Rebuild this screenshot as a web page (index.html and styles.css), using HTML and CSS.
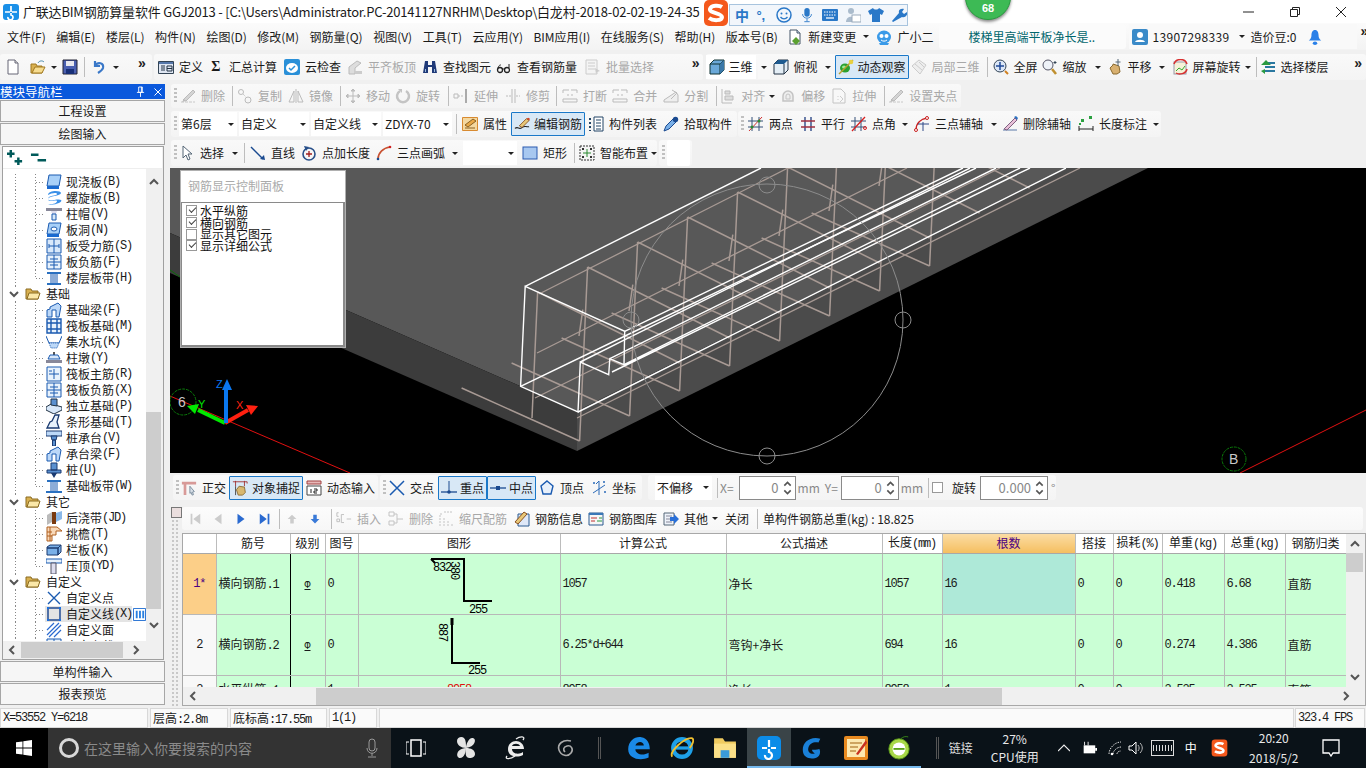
FILE: index.html
```html
<!DOCTYPE html>
<html lang="zh-CN">
<head>
<meta charset="utf-8">
<title>广联达BIM钢筋算量软件 GGJ2013</title>
<link rel="stylesheet" href="styles.css">
</head>
<body>
<svg class="sprite" xmlns="http://www.w3.org/2000/svg">
<symbol id="new" viewBox="0 0 16 16"><path d="M3 1h7l3 3v11H3z" fill="#fff" stroke="#667"/><path d="M10 1v3h3" fill="#ddd" stroke="#667"/></symbol>
<symbol id="open" viewBox="0 0 16 16"><path d="M1 5h5l1 2h5v7H1z" fill="#d8b050" stroke="#a07820"/><path d="M2 14l3-6h10l-3 6z" fill="#f6dc90" stroke="#a07820"/><path d="M8 4c1-2 4-3 6-1" stroke="#48a" fill="none"/></symbol>
<symbol id="save" viewBox="0 0 16 16"><path d="M1 1h14v14H1z" fill="#4a5fb0" stroke="#223"/><path d="M4 2h8v5H4z" fill="#e8e8ee"/><path d="M4 10h8v5H4z" fill="#182f78"/></symbol>
<symbol id="undo" viewBox="0 0 16 16"><path d="M4 2v5h5M4 7c3-5 9-3 8 2-.5 2-2 3-5 5" fill="none" stroke="#3a78c8" stroke-width="2.2"/></symbol>
<symbol id="def" viewBox="0 0 16 16"><path d="M.5 2.500h15v12H.5z" fill="#dfe6f2" stroke="#345"/><path d="M1 3h14v2H1z" fill="#5577aa"/><path d="M3 7h4M3 9h4M3 11h4M9 7h5v5H9zM9 9.500h5" stroke="#234" fill="none"/></symbol>
<symbol id="cloud" viewBox="0 0 16 16"><rect width="16" height="16" rx="2" fill="#2a90d8"/><ellipse cx="8" cy="9" rx="6" ry="5" fill="#fff"/><path d="M5 9l2 2 4-4" stroke="#2a90d8" stroke-width="1.500" fill="none"/></symbol>
<symbol id="flush" viewBox="0 0 16 16"><path d="M2 15V8l8-6 4 2-6 5v6z" fill="#ddd" stroke="#bbb"/><path d="M8 12h7v3H8z" fill="#ccc"/></symbol>
<symbol id="binoc" viewBox="0 0 16 16"><path d="M3 2h3v4h4V2h3l2 12h-5V8H6v6H1z" fill="#203a78"/><path d="M3 10h1v3H3zM12 10h1v3h-1z" fill="#9bd"/></symbol>
<symbol id="glass" viewBox="0 0 16 16"><circle cx="4" cy="11" r="2.500" fill="none" stroke="#222" stroke-width="1.300"/><circle cx="11" cy="11" r="2.500" fill="none" stroke="#222" stroke-width="1.300"/><path d="M6 10h3M2 9c1-3 2-3 3-3M13 9V5" stroke="#222" fill="none"/></symbol>
<symbol id="batch" viewBox="0 0 16 16"><path d="M1 1h11v14H1z" fill="#f4f4f4" stroke="#ccc"/><path d="M3 4h7M3 7h7M3 10h7" stroke="#ccc"/><path d="M10 9l5 3-3 1-1 2z" fill="#ccc"/></symbol>
<symbol id="cube" viewBox="0 0 16 16"><path d="M1 5l4-4h10v10l-4 4H1z" fill="#6aa8d8" stroke="#133"/><path d="M1 5h10v10M11 5l4-4" fill="none" stroke="#133"/><path d="M11 5l4-4v10l-4 4z" fill="#3a78a8"/></symbol>
<symbol id="cubetop" viewBox="0 0 16 16"><path d="M1 5l4-4h10v10l-4 4H1z" fill="#e4eef6" stroke="#234"/><path d="M1 5l4-4h10l-4 4z" fill="#1d5a90"/><path d="M11 5v10" stroke="#234"/></symbol>
<symbol id="orbit" viewBox="0 0 16 16"><ellipse cx="7" cy="9" rx="5" ry="4.500" fill="#2aa030"/><ellipse cx="6" cy="8" rx="2" ry="1.500" fill="#9e9"/><path d="M1 15L15 1" stroke="#b8a030" stroke-width="1.500"/><circle cx="13" cy="3" r="2.300" fill="#e8d040"/></symbol>
<symbol id="local" viewBox="0 0 16 16"><path d="M1 7l7-6 7 5-6 9z" fill="#eee" stroke="#ccc"/><path d="M4 5l7 6M8 3l5 5M1 7l8 8" stroke="#ccc" fill="none"/></symbol>
<symbol id="fit" viewBox="0 0 16 16"><circle cx="7" cy="7" r="6" fill="#dbe6f6" stroke="#345"/><path d="M7 3v8M3 7h8" stroke="#204a98" stroke-width="1.500"/><path d="M12 12l3 3" stroke="#d08020" stroke-width="2"/></symbol>
<symbol id="zoom" viewBox="0 0 16 16"><circle cx="6" cy="6" r="5" fill="#eef2f8" stroke="#556"/><path d="M10 10l4 5" stroke="#c09030" stroke-width="2.500"/><path d="M13 2v3M11.500 3.500h3" stroke="#345"/></symbol>
<symbol id="hand" viewBox="0 0 16 16"><path d="M3 9l3-3v-1l6 2 1 6-3 2H6z" fill="#d8b070" stroke="#8a6a30"/><path d="M11 0v7M8.500 3h5" stroke="#567"/></symbol>
<symbol id="srot" viewBox="0 0 16 16"><rect x="2" y="3" width="12" height="12" fill="#f6f2d8" stroke="#99a"/><path d="M4 12l3-3 3 2 3-4" stroke="#3a3" fill="none"/><path d="M2 5c2-6 11-6 13 0M15 10c-1 5-8 6-11 4" stroke="#d83030" stroke-width="1.500" fill="none"/></symbol>
<symbol id="floors" viewBox="0 0 16 16"><path d="M5 3h10v2H5zM5 7h10v2H5zM5 11h10v2H5z" fill="#2a78a0"/><path d="M6 1L1 6h10M1 12l4-2v5z" fill="#2a9a40"/></symbol>
<symbol id="erase" viewBox="0 0 16 16"><path d="M1 14h14" stroke="#c8c8c8" stroke-dasharray="3 1"/><path d="M3 12L13 2l2 2-9 9z" fill="#d4d4d4" stroke="#bbb"/><path d="M2 14l2-3 2 2z" fill="#bbb"/></symbol>
<symbol id="copy" viewBox="0 0 16 16"><circle cx="4" cy="4" r="2.500" fill="none" stroke="#bbb"/><circle cx="11" cy="12" r="3" fill="none" stroke="#bbb"/><path d="M6 6l3 3" stroke="#bbb" stroke-dasharray="1 1"/></symbol>
<symbol id="mirror" viewBox="0 0 16 16"><path d="M8 1v14M1 14L6 3v11zM15 14L10 3v11z" fill="none" stroke="#bbb"/></symbol>
<symbol id="move" viewBox="0 0 16 16"><path d="M8 1v14M1 8h14M8 1L6 3h4zM8 15l-2-2h4zM1 8l2-2v4zM15 8l-2-2v4z" fill="#ccc" stroke="#bbb"/></symbol>
<symbol id="rot" viewBox="0 0 16 16"><path d="M5 3a6 6 0 1 0 6 0" fill="none" stroke="#c4c4c4" stroke-width="2.500"/><path d="M3 1h4v4" fill="#c4c4c4"/></symbol>
<symbol id="ext" viewBox="0 0 16 16"><path d="M5 8h5" fill="none" stroke="#bbb" stroke-dasharray="2 1"/><path d="M13 1v14" stroke="#aaa" stroke-width="2"/><path d="M1 6h4v4H1z" fill="none" stroke="#bbb"/></symbol>
<symbol id="trim" viewBox="0 0 16 16"><path d="M7 1v14M10 1v14" stroke="#bbb"/><path d="M1 8h6M11 8h4" stroke="#bbb" stroke-dasharray="2 1"/></symbol>
<symbol id="brk" viewBox="0 0 16 16"><path d="M1 5V2h6M15 5V2H9M1 11h14v3H1z" fill="none" stroke="#bbb"/><path d="M5 7h2M9 7h2" stroke="#bbb"/></symbol>
<symbol id="seg" viewBox="0 0 16 16"><path d="M1 12l12-8 2 3v7H1z" fill="#eee" stroke="#bbb"/><path d="M9 2l5 3-6 6" stroke="#bbb" fill="none"/></symbol>
<symbol id="algn" viewBox="0 0 16 16"><path d="M2 1v14h10" stroke="#bbb" fill="none"/><path d="M5 3h5v3H5zM5 8h8v4H5z" fill="#ddd" stroke="#bbb"/></symbol>
<symbol id="offs" viewBox="0 0 16 16"><path d="M3 13V8a5 5 0 0 1 10 0v5z" fill="#eee" stroke="#c4c4c4" stroke-width="1.500"/><path d="M6 11V8a2 2 0 0 1 4 0v3z" fill="none" stroke="#c4c4c4"/></symbol>
<symbol id="strt" viewBox="0 0 16 16"><path d="M2 1h8l4 4v10H2z" fill="#f8f8f8" stroke="#c4c4c4"/><path d="M9 8l3 3-3 3M7 8v1M7 11v1" stroke="#ccc" fill="none"/></symbol>
<symbol id="prop" viewBox="0 0 16 16"><path d="M.5 1.500h15v13H.5z" fill="#f4d8a0" stroke="#d88a30"/><path d="M3 9l8-6 3 2-8 6z" fill="#e8a848" stroke="#8a6020"/><path d="M3 12h10" stroke="#8a6020"/></symbol>
<symbol id="edit" viewBox="0 0 18 16"><path d="M1 13c4-3 4 2 8-1s4 0 8-1" stroke="#222" fill="none" stroke-width="1.200"/><path d="M6 10L14 2l3 2-8 8z" fill="#e8c878" stroke="#8a5020"/><path d="M14 2l3 2 1-2-2-1z" fill="#d04020"/></symbol>
<symbol id="list" viewBox="0 0 16 16"><path d="M6 1h9v14H6z" fill="#fff" stroke="#246"/><path d="M8 4h5M8 7h5M8 10h5M8 13h5" stroke="#246"/><path d="M1 2h2v2H1zM1 6h2v2H1zM1 10h2v2H1zM1 14h2v1H1z" fill="#246"/></symbol>
<symbol id="pick" viewBox="0 0 16 16"><path d="M1 15l2-5 7-7 3 3-7 7z" fill="#7ab0e8" stroke="#1a4a90"/><circle cx="12.500" cy="3.500" r="2.700" fill="#1a4a90"/></symbol>
<symbol id="two" viewBox="0 0 16 16"><path d="M4 1v14M11 1v14M0 5h15M0 11h15" stroke="#345078"/><path d="M1 15L14 1" stroke="#d03030"/><circle cx="4" cy="11" r="1.500" fill="#2a8a30"/><circle cx="11" cy="5" r="1.500" fill="#2a8a30"/></symbol>
<symbol id="para" viewBox="0 0 16 16"><path d="M5 1v14M11 1v14" stroke="#304a88" stroke-width="1.400"/><path d="M1 5h14M1 11h14" stroke="#a03040" stroke-width="1.400"/></symbol>
<symbol id="angl" viewBox="0 0 16 16"><path d="M4 1v14M10 1v14M0 5h15M0 11h15" stroke="#345078"/><path d="M1 15L14 1" stroke="#d82020" stroke-width="1.300"/><circle cx="14" cy="12" r="1.500" fill="none" stroke="#d82020"/></symbol>
<symbol id="arc3" viewBox="0 0 16 16"><path d="M2 14C2 7 7 3 13 2" fill="none" stroke="#c82020" stroke-width="1.400"/><circle cx="2" cy="14" r="1.500" fill="#fff" stroke="#c82020"/><circle cx="13" cy="2" r="1.500" fill="#fff" stroke="#c82020"/><path d="M9 6v9M4 8h11" stroke="#304a88"/></symbol>
<symbol id="dela" viewBox="0 0 16 16"><path d="M1 14h14" stroke="#5a78a8"/><path d="M2 13L13 2l2 2-10 10z" fill="#e8c0d8" stroke="#806080"/><path d="M12 1l3 3 1-2-2-2z" fill="#2a70c0"/></symbol>
<symbol id="dim" viewBox="0 0 16 16"><path d="M1 10v5M15 10v5M1 13h14" stroke="#222"/><path d="M3 3h3v3H3zM11 0h3v3h-3z" fill="#2aa040"/><path d="M1 8h2" stroke="#2aa040" stroke-width="2"/></symbol>
<symbol id="ptr" viewBox="0 0 16 16"><path d="M4 1v12l3-3 2 5 2-1-2-5h4z" fill="#fff" stroke="#567"/></symbol>
<symbol id="line" viewBox="0 0 16 16"><path d="M1 2l12 12" stroke="#1a4a90" stroke-width="1.500"/><path d="M15 15l-1-5-4 4z" fill="#1a4a90"/></symbol>
<symbol id="addl" viewBox="0 0 16 16"><circle cx="8" cy="9" r="6" fill="none" stroke="#28508a" stroke-width="1.600"/><path d="M8 6v6M5 9h6" stroke="#a02020" stroke-width="1.300"/><path d="M3 1l5 1-3 4z" fill="#28508a"/></symbol>
<symbol id="arc" viewBox="0 0 16 16"><path d="M2 14C2 8 7 3 14 2" fill="none" stroke="#c85030" stroke-width="1.600"/><circle cx="2" cy="14" r="1.300" fill="#1a4a90"/><circle cx="14" cy="2" r="1.300" fill="#d02020"/></symbol>
<symbol id="rect" viewBox="0 0 16 16"><rect x="1" y="2" width="14" height="12" fill="#a8c8f0" stroke="#2a5ab0"/></symbol>
<symbol id="smrt" viewBox="0 0 16 16"><rect x="1" y="1" width="14" height="14" fill="#f4f4f4" stroke="#333" stroke-dasharray="2 1"/><path d="M8 4v8M4 8h8" stroke="#2a8a30"/><path d="M3 3h2v2H3zM11 3h2v2h-2zM3 11h2v2H3zM11 11h2v2h-2z" fill="#333"/></symbol>
<symbol id="orth" viewBox="0 0 18 16"><path d="M1 1h16v3H1zM3 4h3v12H3z" fill="#d89a98"/><path d="M10 6l5 6-2 .500 1 3-1.500.500-1-3L10 14z" fill="#d8e0e8" stroke="#789"/></symbol>
<symbol id="snap" viewBox="0 0 18 16"><path d="M1 1h16v2M4 0v6M14 0v6" fill="none" stroke="#a03030"/><path d="M5 10l3-4 6 1 1 6-3 3H7z" fill="#d8b870" stroke="#8a6a30"/><path d="M4 6v10" stroke="#444"/></symbol>
<symbol id="dyn" viewBox="0 0 16 16"><path d="M1 1h14v3H1z" fill="#e8b8b8" stroke="#a04040"/><path d="M1 6h14v9H1z" fill="#fff" stroke="#444"/><path d="M5 9v4M8 9h3v2H8v2h3" stroke="#222" fill="none"/></symbol>
<symbol id="xpt" viewBox="0 0 16 16"><path d="M1 1l14 14M15 1L1 15" stroke="#1a5ab0" stroke-width="1.500"/></symbol>
<symbol id="perp" viewBox="0 0 16 16"><path d="M0 12h16" stroke="#1a4a90" stroke-width="1.300"/><path d="M8 1v11" stroke="#1a4a90"/><circle cx="8" cy="12" r="1.800" fill="#1a4a90"/></symbol>
<symbol id="midp" viewBox="0 0 16 16"><path d="M0 8h16" stroke="#1a4a90" stroke-width="1.300"/><rect x="6" y="6" width="4" height="4" fill="#1a4a90"/></symbol>
<symbol id="vert" viewBox="0 0 16 16"><path d="M8 1l6 5-2 8H4L2 6z" fill="#e8f0fa" stroke="#1a5ab0" stroke-width="1.400"/></symbol>
<symbol id="coor" viewBox="0 0 16 16"><path d="M8 1v14M8 9l6-4M8 9l-6 4M8 1L5 4" fill="none" stroke="#2a6ab8"/><circle cx="3" cy="3" r="1" fill="#2a6ab8"/><circle cx="13" cy="2" r="1" fill="#2a6ab8"/><circle cx="14" cy="12" r="1" fill="#2a6ab8"/></symbol>
<symbol id="first" viewBox="0 0 16 16"><path d="M3 2h2v12H3zM14 2v12L6 8z" fill="#ccc"/></symbol>
<symbol id="prev" viewBox="0 0 16 16"><path d="M12 2v12L4 8z" fill="#ccc"/></symbol>
<symbol id="next" viewBox="0 0 16 16"><path d="M4 2v12l8-6z" fill="#2a6ad0"/></symbol>
<symbol id="last" viewBox="0 0 16 16"><path d="M2 2v12l8-6zM11 2h2v12h-2z" fill="#2a6ad0"/></symbol>
<symbol id="up" viewBox="0 0 16 16"><path d="M8 3l5 5h-3v5H6V8H3z" fill="#ccc"/></symbol>
<symbol id="down" viewBox="0 0 16 16"><path d="M6 3h4v5h3l-5 5-5-5h3z" fill="#3a7ad8"/></symbol>
<symbol id="ins" viewBox="0 0 18 16"><path d="M3 1H1v4h2M1 8h3v3H1zM6 3h3M6 12h3M6 3v9M12 8h5" stroke="#bbb" fill="none"/></symbol>
<symbol id="dele" viewBox="0 0 16 16"><path d="M1 1h5v4H1zM1 10h5v4H1zM6 3h3M6 12h3M9 3v9M9 8h6" stroke="#c4c4c4" fill="none"/></symbol>
<symbol id="scal" viewBox="0 0 16 16"><path d="M2 15V3h2M6 15V6M10 15V9M14 15v-3M6 1h8" stroke="#c4c4c4" stroke-dasharray="2 1" fill="none"/></symbol>
<symbol id="info" viewBox="0 0 16 16"><path d="M4 3h11v12H4z" fill="#dfe8f8" stroke="#2a5a90"/><path d="M1 11L10 1l3 2-9 10z" fill="#e8c878" stroke="#8a5020"/></symbol>
<symbol id="libr" viewBox="0 0 16 16"><path d="M1 2h14v12H1z" fill="#f6f6f6" stroke="#2a5a90"/><path d="M1 2h14v2H1z" fill="#3a78b8"/><path d="M3 7h6M3 10h4" stroke="#c03030"/><path d="M11 7h3M9 10h5" stroke="#2a9a40"/></symbol>
<symbol id="othr" viewBox="0 0 16 16"><path d="M1 2h10v12H1z" fill="#eef3fa" stroke="#567"/><path d="M3 5h6M3 8h6M3 11h6" stroke="#889"/><path d="M7 6h4V3l5 5-5 5v-3H7z" fill="#2a70d8"/></symbol>
<symbol id="folder" viewBox="0 0 16 16"><path d="M1 3h5l1 2h6v8H1z" fill="#d8b050" stroke="#8a6a20"/><path d="M2 13l2-6h11l-2 6z" fill="#fbe8a8" stroke="#8a6a20"/></symbol>
<symbol id="slab" viewBox="0 0 16 16"><path d="M3 1h12l-2 11H1z" fill="#a8d0f8" stroke="#1a5ab0"/><path d="M1 12h12v3H1z" fill="#1a6ad0"/></symbol>
<symbol id="spir" viewBox="0 0 16 16"><path d="M2 5c0-5 13-5 13-2S2 6 2 9s11-1 13 1-5 5-13 5c6-1 9-2 9-4s-9 2-9-2S11 6 11 4 5 3 2 5z" fill="#3a90e8"/></symbol>
<symbol id="capi" viewBox="0 0 16 16"><path d="M0 2h16v3H0z" fill="#889"/><path d="M5 5h6l-1 3H6z" fill="#dde"/><path d="M6 8h4v6H6z" fill="#d8e8f8" stroke="#1a5ab0"/></symbol>
<symbol id="hole" viewBox="0 0 16 16"><path d="M3 1h12l-2 11H1z" fill="#a8d0f8" stroke="#1a5ab0"/><ellipse cx="8" cy="7" rx="3" ry="2" fill="#fff" stroke="#1a5ab0"/><path d="M1 12h12v3H1z" fill="#1a6ad0"/></symbol>
<symbol id="sbar" viewBox="0 0 16 16"><path d="M1 1h14v14H1z" fill="#d8e8fa" stroke="#1a5ab0"/><path d="M8 1v14M3 8h10M3 6v4M13 6v4" stroke="#1a5ab0"/></symbol>
<symbol id="nbar" viewBox="0 0 16 16"><path d="M1 1h14v14H1z" fill="#e8f2fc" stroke="#1a5ab0"/><path d="M8 1v14M1 8h14M4 5h8M4 11h8" stroke="#1a5ab0"/></symbol>
<symbol id="band" viewBox="0 0 16 16"><path d="M1 2h14v2H1zM1 13h14v2H1z" fill="#2a70c0"/><path d="M5 4v9M11 4v9M7 4v9M9 4v9" stroke="#1a5ab0"/></symbol>
<symbol id="fbm" viewBox="0 0 16 16"><path d="M1 15V8l3-1V5l8-4 3 3-2 11h-3V8H6v7z" fill="#bcd8f8" stroke="#1a5ab0"/></symbol>
<symbol id="raft" viewBox="0 0 16 16"><path d="M1 1h14v14H1zM1 5h14M1 11h14M5 1v14M11 1v14" fill="#e8f2fc" stroke="#1a5ab0" stroke-width="1.400"/></symbol>
<symbol id="pit" viewBox="0 0 16 16"><path d="M0 2l3 7h10l3-7" fill="none" stroke="#1a5ab0"/><path d="M3 9l2 5h6l2-5z" fill="#bcd8f8" stroke="#1a5ab0" stroke-dasharray="1 1"/></symbol>
<symbol id="pier" viewBox="0 0 16 16"><path d="M7 2h2v3H7z" fill="#555"/><path d="M4 5h8l2 4H2z" fill="#d8e8fa" stroke="#1a5ab0"/><path d="M0 10h16v3H0z" fill="#889"/></symbol>
<symbol id="rmain" viewBox="0 0 16 16"><path d="M1 1h14v14H1z" fill="#e8f2fc" stroke="#1a5ab0"/><path d="M8 3v10M3 8h10M3 5h3" stroke="#1a5ab0"/></symbol>
<symbol id="indp" viewBox="0 0 16 16"><path d="M0 9l5-3 11 3v3l-8 4-8-4z" fill="#d8e8fa" stroke="#234"/><path d="M5 7V1h6v7z" fill="#5a90d0" stroke="#234"/></symbol>
<symbol id="strp" viewBox="0 0 16 16"><path d="M1 14l3-6 2-1 3-6h4l-2 7 2 6z" fill="#e8f2fc" stroke="#1a3a70" stroke-width="1.300"/></symbol>
<symbol id="pcap" viewBox="0 0 16 16"><path d="M0 1h16v5H0z" fill="#bcd8f8" stroke="#1a3a70"/><path d="M5 6h6l-1 4H6zM6.500 10h3v6h-3z" fill="#5a90d0" stroke="#1a3a70"/></symbol>
<symbol id="pile" viewBox="0 0 16 16"><path d="M5 1h6v7H5zM1 8h14v3H1z" fill="#5a90d0" stroke="#1a3a70"/><path d="M5 11h6l-3 5z" fill="#1a3a70"/></symbol>
<symbol id="fbnd" viewBox="0 0 16 16"><path d="M1 2h14v2H1zM0 13h16v2H0z" fill="#2a70c0"/><path d="M5 4v9M11 4v9M7 4v9M9 4v9" stroke="#1a5ab0"/></symbol>
<symbol id="pour" viewBox="0 0 16 16"><path d="M1 5l5-3v10l-5 3z" fill="#bbb"/><path d="M6 2h4v12H6z" fill="#7a3a10"/><path d="M10 3l6-2v8l-6 3z" fill="#8ab8e8"/></symbol>
<symbol id="eave" viewBox="0 0 16 16"><path d="M1 1h10l5 4H10v4H6v6H1z" fill="#f8d8b8" stroke="#b06020"/><path d="M1 6h5M1 10h5M4 1v14" stroke="#b06020"/></symbol>
<symbol id="rail" viewBox="0 0 16 16"><path d="M1 5l3-2h11l-3 3H1zM1 6h11v7H1zM12 6l3-3v7l-3 3z" fill="#7ab0e8" stroke="#1a3a70"/></symbol>
<symbol id="copi" viewBox="0 0 16 16"><path d="M0 1h16v4H0z" fill="#e8f2fc" stroke="#1a5ab0"/><path d="M5 5h5v11H5z" fill="#dde" stroke="#556"/></symbol>
<symbol id="xpnt" viewBox="0 0 16 16"><path d="M2 2l12 12M14 2L2 14" stroke="#1a5ab0" stroke-width="1.400"/></symbol>
<symbol id="xlin" viewBox="0 0 16 16"><rect x="2" y="2" width="12" height="12" fill="none" stroke="#14408c" stroke-width="1.400"/><path d="M1 1h2v2H1zM13 1h2v2h-2zM1 13h2v2H1zM13 13h2v2h-2z" fill="#1a70e0"/></symbol>
<symbol id="xfac" viewBox="0 0 16 16"><path d="M1 8l7-7M1 13L13 1M3 15L15 3M8 15l7-7" stroke="#2a6ad0" stroke-width="1.200"/></symbol>
<symbol id="cols" viewBox="0 0 14 14"><path d="M.5.500h13v13H.5z" fill="#fff" stroke="#1a6ad0"/><path d="M3 3h2v8H3zM6.500 3h2v8h-2zM10 3h2v8h-2z" fill="#2a80e0"/></symbol>
<symbol id="chu" viewBox="0 0 10 10"><path d="M1 7l4-4 4 4" fill="none" stroke="#555" stroke-width="2"/></symbol>
<symbol id="chd" viewBox="0 0 10 10"><path d="M1 3l4 4 4-4" fill="none" stroke="#555" stroke-width="2"/></symbol>
<symbol id="chl" viewBox="0 0 10 10"><path d="M7 1L3 5l4 4" fill="none" stroke="#555" stroke-width="2"/></symbol>
<symbol id="chr" viewBox="0 0 10 10"><path d="M3 1l4 4-4 4" fill="none" stroke="#555" stroke-width="2"/></symbol>
<symbol id="chw" viewBox="0 0 12 12"><path d="M0 9l6-6 6 6" fill="none" stroke="#eee" stroke-width="1.200"/></symbol>
<symbol id="pp" viewBox="0 0 18 18"><path d="M4 1v8M0 5h8M12 9v8M8 13h8" stroke="#005a5a" stroke-width="2.600" fill="none"/></symbol>
<symbol id="mm" viewBox="0 0 18 18"><path d="M1 6h8M8 12h9" stroke="#005a5a" stroke-width="2.600" fill="none"/></symbol>
<symbol id="npin" viewBox="0 0 10 12"><path d="M3 1h4v6H3zM1 7h8M5 7v5M6 1v6" stroke="#fff" fill="none"/></symbol>
<symbol id="nx" viewBox="0 0 8 8"><path d="M.5.500l7 7M7.500.500l-7 7" stroke="#fff"/></symbol>
<symbol id="logo" viewBox="0 0 16 16"><rect width="16" height="16" rx="3" fill="#1a90e8"/><path d="M8 2v6M2 8h5M9 8h5M8 9v2a2.500 2.500 0 1 1-3 2" stroke="#fff" stroke-width="1.700" fill="none"/></symbol>
<symbol id="nv" viewBox="0 0 16 16"><path d="M3 1h7l3 3v11H3z" fill="#fff" stroke="#456"/><path d="M10 1v3h3" fill="#cde" stroke="#456"/><path d="M9 8l4 4-4 4-4-4z" fill="#5aa030"/></symbol>
<symbol id="bot" viewBox="0 0 16 16"><ellipse cx="8" cy="8" rx="7" ry="6.500" fill="#3a9ae8"/><circle cx="5.500" cy="7" r="2" fill="#fff"/><circle cx="10.500" cy="7" r="2" fill="#fff"/><path d="M5 11c2 1.500 4 1.500 6 0" stroke="#fff" fill="none"/><path d="M3 14l1 2h8l1-2" fill="#3a9ae8"/></symbol>
<symbol id="user" viewBox="0 0 16 16"><rect width="16" height="16" rx="2" fill="#3a8ac8"/><circle cx="8" cy="6" r="3" fill="#fff"/><path d="M3 13c1-3 9-3 10 0z" fill="#fff"/></symbol>
<symbol id="bell" viewBox="0 0 14 18"><path d="M7 1c3 0 4 3 4 6 0 3 1 4 3 6H0c2-2 3-3 3-6 0-3 1-6 4-6z" fill="#2a80e8"/><ellipse cx="7" cy="16" rx="2.500" ry="2" fill="#2a80e8"/></symbol>
<symbol id="sgs" viewBox="0 0 26 26"><rect x="1" width="24" height="26" rx="5" fill="#f4581c"/><path d="M19 7c-3-2-11-2-12 2s12 4 12 8-9 4-13 1" fill="none" stroke="#fff" stroke-width="4"/></symbol>
<symbol id="smile" viewBox="0 0 16 16"><circle cx="8" cy="8" r="7" fill="none" stroke="#2a78c8" stroke-width="1.500"/><circle cx="5.500" cy="6.500" r="1" fill="#2a78c8"/><circle cx="10.500" cy="6.500" r="1" fill="#2a78c8"/><path d="M4.500 10c2 2.500 5 2.500 7 0" fill="none" stroke="#2a78c8" stroke-width="1.300"/></symbol>
<symbol id="mic" viewBox="0 0 16 18"><rect x="5" y="1" width="6" height="10" rx="3" fill="#2a78c8"/><path d="M3 8c0 6 10 6 10 0M8 13v3M5 16.500h6" stroke="#2a78c8" fill="none"/></symbol>
<symbol id="mic2" viewBox="0 0 16 20"><rect x="5" y="1" width="6" height="12" rx="3" fill="none" stroke="#999"/><path d="M3 10c0 7 10 7 10 0M8 15v3M4 19h8" stroke="#999" fill="none"/></symbol>
<symbol id="kb" viewBox="0 0 16 16"><rect y="2" width="16" height="12" rx="1" fill="#2a78c8"/><path d="M2 5h12M2 8h12" stroke="#fff" stroke-dasharray="1.500 1"/><path d="M4 11h8" stroke="#fff" stroke-width="1.300"/></symbol>
<symbol id="pers" viewBox="0 0 16 16"><circle cx="6" cy="4" r="3" fill="#aabbcc"/><path d="M1 15c0-7 10-7 10 0z" fill="#aabbcc"/><rect x="7" y="8" width="9" height="7" fill="#fff" stroke="#9ab"/></symbol>
<symbol id="shirt" viewBox="0 0 16 16"><path d="M5 1L0 4l2 4 2-1v8h8V7l2 1 2-4-5-3c-1 2-5 2-6 0z" fill="#2a78c8"/></symbol>
<symbol id="wren" viewBox="0 0 16 16"><path d="M2 15l-1-1 7-8c-1-3 2-5 5-4l-2 3 2 2 3-2c1 3-2 6-5 5z" fill="#2a78c8"/></symbol>
<symbol id="winl" viewBox="0 0 16 16"><path d="M0 2.300l6.500-.9v6.200H0zM7.300 1.300L16 0v7.600H7.300zM0 8.400h6.500v6.200L0 13.700zM7.300 8.400H16V16l-8.700-1.200z" fill="#fff"/></symbol>
<symbol id="tskv" viewBox="0 0 20 18"><rect x="5" y="1" width="10" height="16" fill="none" stroke="#fff" stroke-width="1.500"/><path d="M3 3H0v12h3M17 3h3v12h-3" fill="none" stroke="#fff"/></symbol>
<symbol id="pinw" viewBox="0 0 20 24"><path d="M10 12C5 12 1 9 1 5s5-5 7-3 2 6 2 10c0-4 3-11 7-10s2 9-7 10c5 0 9 2 9 6s-6 5-8 3-1-5-1-9c0 4-2 10-6 10S-1 13 10 12z" fill="#e4e4e4"/></symbol>
<symbol id="iew" viewBox="0 0 22 24"><path d="M3 13c0-5 4-8 8-8s8 3 8 8H7c0 5 7 6 11 3v3c-6 3-15 2-15-6zM7 10h8c-1-3-7-3-8 0z" fill="#ececec"/><path d="M2 20c-3 4 4 3 8 0M18 4c3-4-3-4-7-1" fill="none" stroke="#ececec" stroke-width="1.300"/></symbol>
<symbol id="swrl" viewBox="0 0 20 20"><path d="M15 3C7 1 1 6 3 12s9 7 12 3 0-8-4-7-4 4-2 6" fill="none" stroke="#aaa" stroke-width="1.600"/></symbol>
<symbol id="edg" viewBox="0 0 20 20"><path d="M1 11C1 4 7 0 12 1c5 1 7 5 7 10H7c0 4 6 6 11 3v4c-7 3-17 1-17-7zM7 8h7c0-4-6-4-7 0z" fill="#1a8ae8"/></symbol>
<symbol id="ie" viewBox="0 0 22 22"><circle cx="11" cy="11" r="8" fill="none" stroke="#1ea0e8" stroke-width="4"/><path d="M3 11h16" stroke="#1ea0e8" stroke-width="3"/><path d="M2 19C-1 14 14 1 20 2c3 1 0 7-2 9" fill="none" stroke="#f0c030" stroke-width="1.700"/></symbol>
<symbol id="fold" viewBox="0 0 22 22"><path d="M1 2h8l2 3h10v15H1z" fill="#f0cb60"/><path d="M1 7h20v13H1z" fill="#fbe088"/><path d="M7 13h8v7H7z" fill="#3a9ad8"/></symbol>
<symbol id="glod" viewBox="0 0 24 24"><rect x="0" y="0" width="24" height="24" rx="5" fill="#0c8ce8"/><path d="M12 4v7M5 12h5M14 12h5M12 13v3a3.500 3.500 0 1 1-4 3" stroke="#fff" stroke-width="2.200" fill="none"/></symbol>
<symbol id="gapp" viewBox="0 0 24 26"><path d="M21 3C11 0 2 6 2 15s8 10 13 9 7-6 5-10c-3 1-6 1-8 1 0 2 2 3 3 4-4 1-8-1-7-6s6-7 11-6z" fill="#1a80d8"/></symbol>
<symbol id="note" viewBox="0 0 24 24"><rect width="24" height="24" rx="2" fill="#e88a20"/><rect x="3" y="3" width="18" height="18" fill="#fce8b0"/><path d="M6 7h12M6 11h8M6 15h6" stroke="#a06010"/><path d="M12 18L22 4l1 3-9 12z" fill="#c83020"/></symbol>
<symbol id="ball" viewBox="0 0 24 26"><circle cx="12" cy="14" r="11" fill="#a8d848" stroke="#5a9a18"/><circle cx="12" cy="14" r="7" fill="#fff"/><path d="M6 14h12" stroke="#5aa018" stroke-width="2"/><path d="M14 3c2-2 5-3 8-2" stroke="#3a8a18" fill="none"/></symbol>
<symbol id="bat" viewBox="0 0 18 16"><rect x="3" y="5" width="13" height="9" fill="#fff"/><path d="M4 1v4M8 1v4" stroke="#fff"/><path d="M16 8h2v3h-2z" fill="#fff"/></symbol>
<symbol id="wifi" viewBox="0 0 16 16"><path d="M2 14C2 8 8 2 14 2M6 14c0-3 4-7 8-7M10 14c0-2 2-3 4-3" fill="none" stroke="#ddd" stroke-dasharray="1.500 1"/><circle cx="5" cy="14" r="1.300" fill="#fff"/></symbol>
<symbol id="spk" viewBox="0 0 16 16"><path d="M1 6h3l4-4v12l-4-4H1z" fill="none" stroke="#fff"/><path d="M10 5c1.500 2 1.500 4 0 6M12 3c3 3 3 7 0 10" fill="none" stroke="#bbb"/></symbol>
<symbol id="ntf" viewBox="0 0 18 18"><path d="M1 1h16v13h-6l-2 3-2-3H1z" fill="none" stroke="#fff" stroke-width="1.300"/></symbol>
<symbol id="wmin" viewBox="0 0 12 12"><path d="M0 6h11" stroke="#222"/></symbol>
<symbol id="wmax" viewBox="0 0 12 12"><path d="M1.500 3.500h7v7h-7zM3.500 3.500v-2h7v7h-2" fill="none" stroke="#222"/></symbol>
<symbol id="wcls" viewBox="0 0 12 12"><path d="M1 1l10 10M11 1L1 11" stroke="#222"/></symbol>
</svg>

<header class="title">
  <svg class="i logo"><use href="#logo"/></svg>
  <span class="title-text">广联达BIM钢筋算量软件 GGJ2013 - [C:\Users\Administrator.PC-20141127NRHM\Desktop\白龙村-2018-02-02-19-24-35</span>
  <span class="winbtns">
    <svg class="wi"><use href="#wmin"/></svg>
    <svg class="wi"><use href="#wmax"/></svg>
    <svg class="wi"><use href="#wcls"/></svg>
  </span>
</header>

<div class="ime">
  <svg class="ime-s"><use href="#sgs"/></svg>
  <div class="ime-bar">
    <span class="ime-zh">中</span><span class="ime-pt">°,</span>
    <svg class="i"><use href="#smile"/></svg>
    <svg class="i"><use href="#mic"/></svg>
    <svg class="i"><use href="#kb"/></svg>
    <svg class="i"><use href="#pers"/></svg>
    <svg class="i"><use href="#shirt"/></svg>
    <svg class="i"><use href="#wren"/></svg>
  </div>
</div>
<div class="score"><span>68</span></div>

<nav class="menu">
  <span>文件(F)</span><span>编辑(E)</span><span>楼层(L)</span><span>构件(N)</span><span>绘图(D)</span><span>修改(M)</span><span>钢筋量(Q)</span><span>视图(V)</span><span>工具(T)</span><span>云应用(Y)</span><span>BIM应用(I)</span><span>在线服务(S)</span><span>帮助(H)</span><span>版本号(B)</span>
  <span class="t"><svg class="i"><use href="#nv"/></svg>新建变更</span><i class="c cv1"></i>
  <span class="t bt"><svg class="i"><use href="#bot"/></svg>广小二</span>
  <span class="tip">楼梯里高端平板净长是..</span>
  <span class="acct">
    <svg class="i"><use href="#user"/></svg><b class="ph">13907298339</b><i class="c m5"></i><b class="coin">造价豆:0</b><svg class="i bell"><use href="#bell"/></svg>
  </span>
  <span class="more">»</span>
</nav>

<div class="bar1">
  <div class="grp g-a">
    <svg class="i"><use href="#new"/></svg>
    <svg class="i m9"><use href="#open"/></svg><i class="c m5"></i>
    <svg class="i m5"><use href="#save"/></svg>
    <i class="sep m6"></i>
    <svg class="i m6"><use href="#undo"/></svg><i class="c m6"></i>
    <span class="more push">»</span>
  </div>
  <div class="grp g-b">
    <span class="t"><svg class="i"><use href="#def"/></svg>定义</span>
    <span class="t m5"><b class="sig">Σ</b>汇总计算</span>
    <span class="t m7"><svg class="i"><use href="#cloud"/></svg>云检查</span>
    <span class="t m6 off"><svg class="i"><use href="#flush"/></svg>平齐板顶</span>
    <span class="t m6"><svg class="i"><use href="#binoc"/></svg>查找图元</span>
    <span class="t m5"><svg class="i"><use href="#glass"/></svg>查看钢筋量</span>
    <span class="t m8 off"><svg class="i"><use href="#batch"/></svg>批量选择</span>
    <span class="more push">»</span>
  </div>
  <div class="grp g-c">
    <span class="t white"><svg class="i"><use href="#cube"/></svg>三维</span><span class="dd"><i class="c"></i></span>
    <span class="t m3"><svg class="i"><use href="#cubetop"/></svg>俯视</span><i class="c m7"></i>
    <span class="t on m4"><svg class="i"><use href="#orbit"/></svg>动态观察</span>
    <span class="t m2 off"><svg class="i"><use href="#local"/></svg>局部三维</span>
    <i class="sep m7"></i>
    <span class="t m5"><svg class="i"><use href="#fit"/></svg>全屏</span>
    <span class="t m4"><svg class="i"><use href="#zoom"/></svg>缩放</span><i class="c m8"></i>
    <span class="t m6"><svg class="i"><use href="#hand"/></svg>平移</span><i class="c m7"></i>
    <span class="t m7"><svg class="i"><use href="#srot"/></svg>屏幕旋转</span><i class="c m4"></i>
    <i class="sep m5"></i>
    <span class="t m3"><svg class="i"><use href="#floors"/></svg>选择楼层</span>
    <span class="more push">»</span>
  </div>
</div>

<main class="work">
  <aside class="left">
    <div class="nav-head"><span>模块导航栏</span><svg class="npin"><use href="#npin"/></svg><svg class="nx"><use href="#nx"/></svg></div>
    <div class="nav-btn">工程设置</div>
    <div class="nav-btn">绘图输入</div>
    <div class="tree-box">
      <div class="tree-tools"><svg class="pmi"><use href="#pp"/></svg><svg class="pmi"><use href="#mm"/></svg></div>
      <div class="tree-body">
        <div class="tree">
          <div class="rw lf"><svg class="i"><use href="#slab"/></svg>现浇板<span class="m">(B)</span></div>
          <div class="rw lf"><svg class="i"><use href="#spir"/></svg>螺旋板<span class="m">(B)</span></div>
          <div class="rw lf"><svg class="i"><use href="#capi"/></svg>柱帽<span class="m">(V)</span></div>
          <div class="rw lf"><svg class="i"><use href="#hole"/></svg>板洞<span class="m">(N)</span></div>
          <div class="rw lf"><svg class="i"><use href="#sbar"/></svg>板受力筋<span class="m">(S)</span></div>
          <div class="rw lf"><svg class="i"><use href="#nbar"/></svg>板负筋<span class="m">(F)</span></div>
          <div class="rw lf end"><svg class="i"><use href="#band"/></svg>楼层板带<span class="m">(H)</span></div>
          <div class="rw fd"><svg class="tw"><use href="#chd"/></svg><svg class="i"><use href="#folder"/></svg>基础</div>
          <div class="rw lf"><svg class="i"><use href="#fbm"/></svg>基础梁<span class="m">(F)</span></div>
          <div class="rw lf"><svg class="i"><use href="#raft"/></svg>筏板基础<span class="m">(M)</span></div>
          <div class="rw lf"><svg class="i"><use href="#pit"/></svg>集水坑<span class="m">(K)</span></div>
          <div class="rw lf"><svg class="i"><use href="#pier"/></svg>柱墩<span class="m">(Y)</span></div>
          <div class="rw lf"><svg class="i"><use href="#rmain"/></svg>筏板主筋<span class="m">(R)</span></div>
          <div class="rw lf"><svg class="i"><use href="#nbar"/></svg>筏板负筋<span class="m">(X)</span></div>
          <div class="rw lf"><svg class="i"><use href="#indp"/></svg>独立基础<span class="m">(P)</span></div>
          <div class="rw lf"><svg class="i"><use href="#strp"/></svg>条形基础<span class="m">(T)</span></div>
          <div class="rw lf"><svg class="i"><use href="#pcap"/></svg>桩承台<span class="m">(V)</span></div>
          <div class="rw lf"><svg class="i"><use href="#fbm"/></svg>承台梁<span class="m">(F)</span></div>
          <div class="rw lf"><svg class="i"><use href="#pile"/></svg>桩<span class="m">(U)</span></div>
          <div class="rw lf end"><svg class="i"><use href="#fbnd"/></svg>基础板带<span class="m">(W)</span></div>
          <div class="rw fd"><svg class="tw"><use href="#chd"/></svg><svg class="i"><use href="#folder"/></svg>其它</div>
          <div class="rw lf"><svg class="i"><use href="#pour"/></svg>后浇带<span class="m">(JD)</span></div>
          <div class="rw lf"><svg class="i"><use href="#eave"/></svg>挑檐<span class="m">(T)</span></div>
          <div class="rw lf"><svg class="i"><use href="#rail"/></svg>栏板<span class="m">(K)</span></div>
          <div class="rw lf end"><svg class="i"><use href="#copi"/></svg>压顶<span class="m">(YD)</span></div>
          <div class="rw fd"><svg class="tw"><use href="#chd"/></svg><svg class="i"><use href="#folder"/></svg>自定义</div>
          <div class="rw lf"><svg class="i"><use href="#xpnt"/></svg>自定义点</div>
          <div class="rw lf sel"><span class="sel-bg"><svg class="i"><use href="#xlin"/></svg>自定义线<span class="m">(X)</span></span><svg class="cols"><use href="#cols"/></svg></div>
          <div class="rw lf"><svg class="i"><use href="#xfac"/></svg>自定义面</div>
          <div class="rw lf"><svg class="i"><use href="#nbar"/></svg>自定义截面</div>
        </div>
        <div class="vs">
          <span class="vs-a"><svg class="ch"><use href="#chu"/></svg></span>
          <span class="vs-t"></span>
          <span class="vs-th"></span>
          <span class="vs-b"><svg class="ch"><use href="#chd"/></svg></span>
        </div>
      </div>
      <div class="hs">
        <span class="hs-a"><svg class="ch"><use href="#chl"/></svg></span>
        <span class="hs-th"></span>
        <span class="hs-b"><svg class="ch"><use href="#chr"/></svg></span>
      </div>
    </div>
    <div class="nav-btn b1">单构件输入</div>
    <div class="nav-btn b2">报表预览</div>
  </aside>

  <section class="right">
    <div class="tb tb2 off">
      <i class="grip"></i>
      <span class="t m3"><svg class="i"><use href="#erase"/></svg>删除</span><i class="sep m7"></i>
      <span class="t m4"><svg class="i"><use href="#copy"/></svg>复制</span>
      <span class="t m6"><svg class="i"><use href="#mirror"/></svg>镜像</span><i class="sep m7"></i>
      <span class="t m4"><svg class="i"><use href="#move"/></svg>移动</span>
      <span class="t m5"><svg class="i"><use href="#rot"/></svg>旋转</span><i class="sep m8"></i>
      <span class="t m4"><svg class="i"><use href="#ext"/></svg>延伸</span>
      <span class="t m7"><svg class="i"><use href="#trim"/></svg>修剪</span><i class="sep m6"></i>
      <span class="t m5"><svg class="i"><use href="#brk"/></svg>打断</span>
      <span class="t m5"><svg class="i"><use href="#brk"/></svg>合并</span>
      <span class="t m6"><svg class="i"><use href="#seg"/></svg>分割</span><i class="sep m8"></i>
      <span class="t m3"><svg class="i"><use href="#algn"/></svg>对齐</span><i class="c m4"></i>
      <span class="t m5"><svg class="i"><use href="#offs"/></svg>偏移</span>
      <span class="t m6"><svg class="i"><use href="#strt"/></svg>拉伸</span><i class="sep m8"></i>
      <span class="t m3"><svg class="i"><use href="#erase"/></svg>设置夹点</span>
    </div>

    <div class="rowline">
      <div class="tb tb3">
        <i class="grip"></i>
        <span class="combo c58 m2">第6层<i class="c"></i></span>
        <span class="combo c70 m2">自定义<i class="c"></i></span>
        <span class="combo c70 m2">自定义线<i class="c"></i></span>
        <span class="combo c69 m2">ZDYX-70<i class="c"></i></span>
        <i class="sep m4"></i>
        <span class="t m5"><svg class="i"><use href="#prop"/></svg>属性</span>
        <span class="t on m4"><svg class="i"><use href="#edit"/></svg>编辑钢筋</span>
        <span class="t m3"><svg class="i"><use href="#list"/></svg>构件列表</span>
        <span class="t m6"><svg class="i"><use href="#pick"/></svg>拾取构件</span>
      </div>
      <div class="tb tb3b">
        <i class="grip"></i>
        <span class="t m4"><svg class="i"><use href="#two"/></svg>两点</span>
        <span class="t m7"><svg class="i"><use href="#para"/></svg>平行</span>
        <span class="t m6"><svg class="i"><use href="#angl"/></svg>点角</span><i class="c m6"></i>
        <span class="t m6"><svg class="i"><use href="#arc3"/></svg>三点辅轴</span><i class="c m8"></i>
        <span class="t m5"><svg class="i"><use href="#dela"/></svg>删除辅轴</span>
        <span class="t m7"><svg class="i"><use href="#dim"/></svg>长度标注</span><i class="c m6"></i>
      </div>
    </div>

    <div class="rowline r4">
      <div class="tb tb4">
        <i class="grip"></i>
        <span class="t m2"><svg class="i"><use href="#ptr"/></svg>选择</span><i class="c m8"></i>
        <i class="sep m6"></i>
        <span class="t m5"><svg class="i"><use href="#line"/></svg>直线</span>
        <span class="t m6"><svg class="i"><use href="#addl"/></svg>点加长度</span>
        <span class="t m6"><svg class="i"><use href="#arc"/></svg>三点画弧</span><i class="c m7"></i>
        <span class="combo c54 m5"><i class="c"></i></span>
        <span class="t m5"><svg class="i"><use href="#rect"/></svg>矩形</span>
        <i class="sep m7"></i>
        <span class="t m4"><svg class="i"><use href="#smrt"/></svg>智能布置</span><i class="c m3"></i>
      </div>
      <div class="tb tb4b"><i class="grip"></i><span class="blank"></span></div>
    </div>

    <div class="viewport">
      <svg class="scene" viewBox="170 168 1196 305" xmlns="http://www.w3.org/2000/svg">
        <defs>
          <g id="st" stroke="#a89a94" stroke-width="1.500" fill="none">
            <path d="M587.600 267L579.600 441M587.600 267l142 71M579.600 441l-118-53M632.800 284.700L629 311"/>
          </g>
        </defs>
        <rect x="170" y="168" width="1196" height="305" fill="#000"/>
        <polygon points="170,168 1067,168 577,411 170,233" fill="#585858"/>
        <polygon points="170,233 577,411 577,451 170,273" fill="#3c3c3c"/>
        <polygon points="577,411 1067,168 1148,168 577,451" fill="#4b4b4b"/>
        <path d="M170 270l10 7" stroke="#0a6a0a" fill="none"/>
        <path d="M170 396L350 473M1366 410l-126 63" stroke="#e01010" fill="none"/>
        <path d="M537.600 292L532 418M537.600 292l142 71M582.800 309.700L579 336" stroke="#a89a94" stroke-width="1.500" fill="none"/>
        <use href="#st"/>
        <use href="#st" x="50" y="-25"/>
        <use href="#st" x="100" y="-50"/>
        <use href="#st" x="150" y="-75"/>
        <use href="#st" x="200" y="-100"/>
        <use href="#st" x="250" y="-125"/>
        <use href="#st" x="300" y="-150"/>
        <use href="#st" x="350" y="-175"/>
        <path d="M539 294L788 168M537 353L907 168M535 398L1000 168M577 418L1080 168" stroke="#a89a94" stroke-width="1.300" fill="none"/>
        <g stroke="#fff" stroke-width="1.400" fill="none">
          <path d="M525.200 286.300L761 168"/>
          <path d="M525.200 286.300L624.700 331.300 624 364.700 609.800 358.700 608.700 374.700 580.300 362 578 412 520.600 386.300Z"/>
          <path d="M520.600 386.300L625 336 976 168"/>
          <path d="M624.700 331.300L963 168M580.300 362L625 339.700 970 168M609.800 358.700L996 168M624 364.700L1020 168M612 372L1030 168M578 412L1066 168"/>
        </g>
        <g stroke="#8c8c8c" fill="none">
          <circle cx="767" cy="320" r="136"/>
          <circle cx="767" cy="185" r="8"/><circle cx="631" cy="320" r="8"/><circle cx="903" cy="320" r="8"/><circle cx="767" cy="456" r="8"/>
        </g>
        <circle cx="183" cy="402" r="13" fill="none" stroke="#0a7a0a" stroke-dasharray="3 1"/>
        <text x="178" y="407" class="axis-label num6">6</text>
        <circle cx="1234" cy="459" r="12" fill="none" stroke="#0a7a0a" stroke-dasharray="3 1"/>
        <text x="1229" y="464" class="axis-label num6">B</text>
        <path d="M225 423L198 410" stroke="#00e800" stroke-width="4"/><path d="M187 406l12-2-4 10z" fill="#00e800"/>
        <path d="M225 423L248 410" stroke="#ff2010" stroke-width="4"/><path d="M258 406l-12-1 5 10z" fill="#ff2010"/>
        <path d="M226 423V390" stroke="#0a78f0" stroke-width="4"/><path d="M227 379l-5 11h10z" fill="#0a78f0"/>
        <text x="216" y="388" class="gz gz-z">Z</text>
        <text x="236" y="409" class="gz gz-x">X</text>
        <text x="198" y="408" class="gz gz-y">Y</text>
      </svg>
      <div class="panel">
        <div class="panel-title">钢筋显示控制面板</div>
        <div class="panel-body">
          <div class="chk"><i class="box ok"></i>水平纵筋</div>
          <div class="chk"><i class="box ok"></i>横向钢筋</div>
          <div class="chk"><i class="box"></i>显示其它图元</div>
          <div class="chk"><i class="box ok"></i>显示详细公式</div>
        </div>
      </div>
    </div>

    <div class="rowline snap">
      <div class="tb sb1">
        <i class="grip g1"></i>
        <span class="t m2"><svg class="i"><use href="#orth"/></svg>正交</span>
        <span class="t on m3"><svg class="i"><use href="#snap"/></svg>对象捕捉</span>
        <span class="t m3"><svg class="i"><use href="#dyn"/></svg>动态输入</span>
      </div>
      <div class="tb sb2">
        <i class="grip"></i>
        <span class="t m3"><svg class="i"><use href="#xpt"/></svg>交点</span>
        <span class="t on tight m4"><svg class="i"><use href="#perp"/></svg>重点</span>
        <span class="t on tight"><svg class="i"><use href="#midp"/></svg>中点</span>
        <span class="t m3"><svg class="i"><use href="#vert"/></svg>顶点</span>
        <span class="t m7"><svg class="i"><use href="#coor"/></svg>坐标</span>
      </div>
      <div class="tb sb3">
        <span class="combo c57">不偏移<i class="c"></i></span>
        <i class="sep m5"></i>
        <span class="lbl m2">X=</span>
        <span class="spin s57 m5">0<i class="spn"><svg class="ch"><use href="#chu"/></svg><svg class="ch"><use href="#chd"/></svg></i></span>
        <span class="lbl m2">mm</span>
        <span class="lbl m5">Y=</span>
        <span class="spin s58 m3">0<i class="spn"><svg class="ch"><use href="#chu"/></svg><svg class="ch"><use href="#chd"/></svg></i></span>
        <span class="lbl m2">mm</span>
        <i class="sep m5"></i>
        <i class="box bx m3"></i>
        <span class="t m9">旋转</span>
        <span class="spin s68 m4">0.000<i class="spn"><svg class="ch"><use href="#chu"/></svg><svg class="ch"><use href="#chd"/></svg></i></span>
        <span class="lbl m3">°</span>
      </div>
    </div>

    <div class="lower">
      <div class="split"><span class="split-x"></span><span class="split-dots"></span></div>
      <div class="lower-main">
        <div class="tb tb5">
          <svg class="i s"><use href="#first"/></svg>
          <svg class="i s m9"><use href="#prev"/></svg>
          <svg class="i s m9"><use href="#next"/></svg>
          <svg class="i s m10"><use href="#last"/></svg>
          <i class="sep m7"></i>
          <svg class="i s m5"><use href="#up"/></svg>
          <svg class="i s m9"><use href="#down"/></svg>
          <i class="sep m9"></i>
          <span class="t off m4"><svg class="i"><use href="#ins"/></svg>插入</span>
          <span class="t off m7"><svg class="i"><use href="#dele"/></svg>删除</span>
          <span class="t off m5"><svg class="i"><use href="#scal"/></svg>缩尺配筋</span>
          <span class="t m7"><svg class="i"><use href="#info"/></svg>钢筋信息</span>
          <span class="t m5"><svg class="i"><use href="#libr"/></svg>钢筋图库</span>
          <span class="t m6"><svg class="i"><use href="#othr"/></svg>其他</span><i class="c m4"></i>
          <span class="t m7">关闭</span>
          <i class="sep m8"></i>
          <span class="t m5">单构件钢筋总重(kg) : 18.825</span>
        </div>
        <div class="gridbox">
          <div class="gridtop">
            <div class="gridview">
              <table class="grid">
                <colgroup><col class="w1"><col class="w2"><col class="w3"><col class="w4"><col class="w5"><col class="w6"><col class="w7"><col class="w8"><col class="w9"><col class="w10"><col class="w11"><col class="w12"><col class="w13"><col class="w14"></colgroup>
                <thead>
                  <tr><th></th><th>筋号</th><th>级别</th><th>图号</th><th>图形</th><th>计算公式</th><th>公式描述</th><th>长度<span class="m">(mm)</span></th><th class="hot">根数</th><th>搭接</th><th>损耗<span class="m">(%)</span></th><th>单重<span class="m">(kg)</span></th><th>总重<span class="m">(kg)</span></th><th>钢筋归类</th></tr>
                </thead>
                <tbody>
                  <tr class="r">
                    <td class="rh cur m">1*</td><td class="bk">横向钢筋<span class="m">.1</span></td><td class="mid"><span class="grade">Φ</span></td><td class="m">0</td>
                    <td class="shape"><svg class="rebar" viewBox="0 0 201 60"><path d="M72 5h33v42h28M72 5l4 4" fill="none" stroke="#000" stroke-width="2"/><text x="110" y="59" class="rt">255</text><text x="74" y="17" class="rt">832</text><text x="0" y="0" class="rt" transform="translate(92 7) rotate(90)">380</text></svg></td>
                    <td class="m">1057</td><td>净长</td><td class="m">1057</td><td class="act m">16</td><td class="m">0</td><td class="m">0</td><td class="m">0.418</td><td class="m">6.68</td><td>直筋</td>
                  </tr>
                  <tr class="r">
                    <td class="rh mid m">2</td><td class="bk">横向钢筋<span class="m">.2</span></td><td class="mid"><span class="grade">Φ</span></td><td class="m">0</td>
                    <td class="shape"><svg class="rebar" viewBox="0 0 201 60"><path d="M93 4v44h28" fill="none" stroke="#000" stroke-width="2"/><path d="M93 3v7" stroke="#000" stroke-width="3"/><text x="109" y="59" class="rt">255</text><text x="0" y="0" class="rt" transform="translate(80 8) rotate(90)">887</text></svg></td>
                    <td class="m">6.25*d+644</td><td>弯钩+净长</td><td class="m">694</td><td class="m">16</td><td class="m">0</td><td class="m">0</td><td class="m">0.274</td><td class="m">4.386</td><td>直筋</td>
                  </tr>
                  <tr class="r3">
                    <td class="rh mid m">3</td><td class="bk">水平纵筋<span class="m">.1</span></td><td class="mid"><span class="grade">Φ</span></td><td class="m">1</td>
                    <td class="mid m red">8958</td>
                    <td class="m">8958</td><td>净长</td><td class="m">8958</td><td class="m">1</td><td class="m">0</td><td class="m">0</td><td class="m">3.535</td><td class="m">3.535</td><td>直筋</td>
                  </tr>
                </tbody>
              </table>
            </div>
            <div class="vs2">
              <span class="vs2-a"><svg class="ch"><use href="#chu"/></svg></span>
              <span class="vs2-th"></span>
              <span class="vs2-sp"></span>
              <span class="vs2-b"><svg class="ch"><use href="#chd"/></svg></span>
            </div>
          </div>
          <div class="hs2">
            <span class="hs2-a"><svg class="ch"><use href="#chl"/></svg></span>
            <span class="hs2-th"></span>
            <span class="hs2-sp"></span>
            <span class="hs2-b"><svg class="ch"><use href="#chr"/></svg></span>
          </div>
        </div>
      </div>
    </div>
  </section>
</main>

<footer class="status">
  <span class="cell c1 m">X=53552 Y=6218</span>
  <span class="cell c2">层高<span class="m">:2.8m</span></span>
  <span class="cell c3">底标高<span class="m">:17.55m</span></span>
  <span class="cell c4 m">1(1)</span>
  <span class="cell c5"></span>
  <span class="cell c6 m">323.4 FPS</span>
</footer>

<div class="taskbar">
  <span class="start"><svg class="tbi16"><use href="#winl"/></svg></span>
  <span class="search"><i class="ring"></i><span class="search-text">在这里输入你要搜索的内容</span><svg class="tb-mic"><use href="#mic2"/></svg></span>
  <span class="tk w50"><svg class="tbi20"><use href="#tskv"/></svg></span>
  <span class="tk w50"><svg class="tbi24"><use href="#pinw"/></svg></span>
  <span class="tk w50"><svg class="tbi24"><use href="#iew"/></svg></span>
  <span class="tk w50"><svg class="tbi20"><use href="#swrl"/></svg></span>
  <i class="tsep m7"></i>
  <span class="tk m16"><svg class="tbi24"><use href="#edg"/></svg></span>
  <span class="tk"><svg class="tbi24"><use href="#ie"/></svg></span>
  <span class="tk"><svg class="tbi24"><use href="#fold"/></svg></span>
  <span class="tk act-tk open"><svg class="tbi24"><use href="#glod"/></svg></span>
  <span class="tk open"><svg class="tbi24"><use href="#gapp"/></svg></span>
  <span class="tk open"><svg class="tbi24"><use href="#note"/></svg></span>
  <span class="tk open"><svg class="tbi24"><use href="#ball"/></svg></span>
  <i class="tsep m15"></i>
  <span class="tray-t">链接</span>
  <span class="tray-cpu"><span>27%</span><span>CPU使用</span></span>
  <svg class="tray-c"><use href="#chw"/></svg>
  <svg class="tray-i t12"><use href="#bat"/></svg>
  <svg class="tray-i t10"><use href="#wifi"/></svg>
  <svg class="tray-i t6"><use href="#spk"/></svg>
  <span class="tray-kb"></span>
  <span class="tray-zh">中</span>
  <svg class="tray-s"><use href="#sgs"/></svg>
  <span class="clock"><span>20:20</span><span>2018/5/2</span></span>
  <svg class="tray-n"><use href="#ntf"/></svg>
</div>
</body>
</html>
```

FILE: styles.css
```css
*{box-sizing:border-box}
html,body{margin:0;padding:0}
body{width:1366px;height:768px;overflow:hidden;background:#f0f0f0;color:#1a1a1a;font:12px/16px "Noto Sans CJK SC","Noto Sans",sans-serif;position:relative}
.sprite{display:none}
i{font-style:normal;display:inline-block}
b{font-weight:400}
.m{font-family:"Liberation Mono",monospace;font-size:12px;letter-spacing:-1.200px}
.m0{margin-left:0}.m2{margin-left:2px}.m3{margin-left:3px}.m4{margin-left:4px}.m5{margin-left:5px}.m6{margin-left:6px}.m7{margin-left:7px}.m8{margin-left:8px}.m9{margin-left:9px}.m10{margin-left:10px}.m15{margin-left:15px}.m16{margin-left:16px}

.i{width:16px;height:16px;flex:none;display:block}
.c{width:0;height:0;border:3px solid transparent;border-top:3px solid #222;border-bottom:0;flex:none}
.sep{width:1px;height:20px;background:#bdbdbd;flex:none}
.t{display:flex;align-items:center;gap:5px;white-space:nowrap;flex:none}
.off{color:#a8a8a8}
.off .t{color:#a8a8a8}
.on{border:1px solid #1a78c8;background:#d8e8f6;height:24px;padding:0 2px;gap:4px;border-radius:1px}
.more{font:700 14px/14px "Liberation Sans",sans-serif;color:#222}
.push{margin-left:auto}
.grip{width:3px;height:16px;flex:none;background:repeating-linear-gradient(#c0c0c0 0 2px,transparent 2px 4px)}

.title{height:23px;background:#fff;display:flex;align-items:center;padding-left:3px}
.title-text{margin-left:4px;font-size:13px;letter-spacing:-.2px;white-space:nowrap}
.winbtns{margin-left:auto;display:flex;gap:34px;padding-right:19px}
.wi{width:12px;height:12px}

.ime{position:absolute;left:703px;top:0;display:flex;align-items:flex-start}
.ime-s{width:26px;height:26px;flex:none;position:relative;z-index:1}
.ime-bar{width:179px;height:22px;margin-top:4px;background:#f2f6fb;border:1px solid #a8c4de;display:flex;align-items:center;padding-left:5px;gap:7px}
.ime-zh{color:#2a78c8;font-weight:700;font-size:14px;width:16px}
.ime-pt{color:#2a78c8;font:700 13px/13px "Liberation Sans",sans-serif;width:14px}
.score{position:absolute;left:965px;top:-26px;width:46px;height:46px;border-radius:50%;background:#3dba55;border:1px solid #2a9a40;box-shadow:0 2px 3px rgba(0,0,0,.45);display:flex;align-items:flex-end;justify-content:center;padding-bottom:5px;color:#fff;font:700 11px/12px "Liberation Sans",sans-serif}

.menu{height:27px;display:flex;align-items:center;padding-left:7px;gap:10.500px;background:linear-gradient(#fbfbfb,#f3f3f3);white-space:nowrap}
.menu .t{margin-left:-1px}
.cv1{margin-left:-4px}
.menu .bt{margin-left:-3px}
.tip{width:187px;height:25px;margin-left:-4.500px;background:#fbfbfb;color:#00666c;display:flex;align-items:center;padding-left:29px;border-radius:3px;flex:none}
.acct{display:flex;align-items:center;gap:4px;width:228px;height:25px;padding-left:3px;margin-left:-7.500px;background:#f9f9f9;flex:none}
.ph{letter-spacing:.35px}
.coin{margin-left:2px}
.bell{margin-left:6px}
.menu .more{margin-left:-7.500px;margin-bottom:12px}

.bar1{height:26px;margin:4px 0;display:flex;gap:2px}
.grp{height:26px;display:flex;align-items:center;background:linear-gradient(#f9f9f9,#f4f4f4);border-radius:3px}
.g-a{width:152px;padding:0 6px 0 5px}
.g-b{width:550px;padding:0 4px}
.g-b .more,.g-a .more{margin-bottom:8px}
.g-c{width:660px;margin-left:1px;padding:0 4px 0 0}
.g-c .more{margin-bottom:8px}
.sig{font:700 14px/16px "Liberation Serif",serif;width:16px;text-align:center}
.white{background:#fff;height:24px;padding-left:3px;padding-right:3px;gap:3px}
.dd{width:12px;height:24px;margin-left:2px;background:#f8f8f8;display:flex;align-items:center;justify-content:center}

.work{display:flex;height:622px}
.left{width:165px;margin-right:5px;display:flex;flex-direction:column;flex:none}
.nav-head{height:15px;background:#0a58dc;color:#fff;display:flex;align-items:center;font-size:12.500px;white-space:nowrap}
.npin{width:9px;height:11px;margin-left:73px;flex:none}
.nx{width:8px;height:8px;margin-left:9px;flex:none}
.nav-btn{height:22px;margin-top:1px;border:1px solid #a6a6a6;background:#f6f6f6;text-align:center;line-height:20px;flex:none;font-size:12px}
.tree-box{height:514px;margin:1px 1px 0 2px;border:1px solid #a0a0a0;background:#f0f0f0;display:flex;flex-direction:column;flex:none}
.tree-tools{height:23px;background:#fff;border-bottom:1px solid #eee;display:flex;gap:6px;padding-left:4px;align-items:center;margin-right:1px}
.pmi{width:17px;height:17px;flex:none}
.tree-body{height:472px;display:flex}
.tree{width:143px;background:#fff;overflow:hidden;padding-top:5px;flex:none}
.rw{height:16px;display:flex;align-items:center;white-space:nowrap;background-repeat:no-repeat}
.lf{padding-left:43px;background-image:repeating-linear-gradient(#888 0 1px,transparent 1px 3px),repeating-linear-gradient(#888 0 1px,transparent 1px 3px),repeating-linear-gradient(90deg,#888 0 1px,transparent 1px 3px);background-size:1px 100%,1px 100%,9px 1px;background-position:12px 0,32px 0,33px 8px}
.end{background-size:1px 100%,1px 9px,9px 1px}
.lf .i{margin-right:4px}
.fd{padding-left:6px;background-image:repeating-linear-gradient(#888 0 1px,transparent 1px 3px);background-size:1px 100%;background-position:12px 0}
.tw{width:10px;height:10px;flex:none;background:#fff}
.fd .i{margin:0 5px 0 6px}
.sel-bg{display:flex;align-items:center;background:#e4e4e4;margin-left:-1px;padding-left:1px;height:16px}
.sel-bg .i{margin-right:4px}
.cols{width:13px;height:13px;margin-left:1px;flex:none}
.vs,.vs2{width:15px;background:#f0f0f0;display:flex;flex-direction:column;align-items:center;flex:none}
.ch{width:10px;height:10px;display:block}
.vs-a{height:26px;display:flex;align-items:center}
.vs-t{flex:1}
.vs-th{width:15px;height:197px;background:#cdcdcd}
.vs-b{height:32px;display:flex;align-items:center}
.hs{height:18px;display:flex;align-items:center;flex:none}
.hs-a{width:18px;display:flex;justify-content:center}
.hs-th{width:102px;height:16px;background:#cdcdcd}
.hs-b{width:26px;display:flex;justify-content:center}
.b1{height:21px;line-height:19px}

.right{width:1196px;display:flex;flex-direction:column;flex:none}
.tb{display:flex;align-items:center;background:linear-gradient(#f9f9f9,#f4f4f4);border-radius:3px;flex:none}
.tb .grip{margin-left:3px}
.tb2{width:790px;height:24px;margin-left:1px}
.rowline{display:flex;margin-top:3px;flex:none}
.tb3{width:566px;height:26px;margin-left:1px}
.tb3b{width:423px;height:26px;margin-left:1px}
.tb4{width:486px;height:26px;margin-left:1px}
.tb4b{width:33px;height:26px;margin-left:2px}
.blank{width:23px;height:26px;background:#fff;margin-left:2px;border-radius:2px}
.combo{height:24px;background:#fff;display:flex;align-items:center;justify-content:space-between;padding:0 3px 0 2px;flex:none;white-space:nowrap}
.c58{width:58px}.c70{width:70px}.c69{width:69px}.c54{width:54px;justify-content:flex-end}.c57{width:57px;margin-left:7px}
.viewport{height:305px;margin-top:2px;position:relative;flex:none;background:#000}
.scene{display:block;width:1196px;height:305px}
.axis-label{font:400 14px "Liberation Sans",sans-serif;fill:#c8c8c8}
.gz{font:11px "Liberation Sans",sans-serif}
.gz-z{fill:#0a78f0}
.gz-x{fill:#ff2010}
.gz-y{fill:#00e800}
.panel{position:absolute;left:10px;top:2px;width:166px;height:178px;background:#f6f6f6;border:1px solid #b0b0b0}
.panel-title{height:31px;background:#fff;color:#aaa;padding:7px 0 0 7px;line-height:16px}
.panel-body{height:145px;background:#fff;border:1px solid #8a8a8a;border-bottom-width:2px;border-right-width:2px;padding-top:2px}
.chk{height:11.700px;line-height:11.700px;display:flex;align-items:center;padding-left:4px;white-space:nowrap;color:#111}
.box{width:11px;height:11px;background:#fff;border:1px solid #999;flex:none;margin-right:3px;position:relative}
.ok::after{content:"";position:absolute;left:2px;top:1px;width:6px;height:3px;border-left:1.500px solid #444;border-bottom:1.500px solid #444;transform:rotate(-45deg)}
.snap{margin-top:2px;height:25px}
.sb1{width:205px;height:25px;margin-left:3px}
.sb2{width:262px;height:25px;margin-left:2px}
.sb3{width:408px;height:25px;margin-left:6px}
.tight{padding:0 2px;gap:3px}
.lbl{color:#888;white-space:nowrap}
.sb3 .t{color:#222}
.spin{height:24px;border:1px solid #8a8a8a;background:#fff;color:#888;display:flex;align-items:center;justify-content:flex-end;gap:4px;padding-right:2px;font-size:13px;flex:none}
.s57{width:57px}.s58{width:58px}.s68{width:68px}
.spn{display:flex;flex-direction:column;width:10px}
.spn .ch{width:9px;height:8px}
.bx{margin-right:0}
.lower{display:flex;height:199px;margin-top:7px;flex:none}
.split{width:12px;display:flex;flex-direction:column;flex:none}
.split-x{width:11px;height:11px;margin-left:1px;background:#eadede;border:1px solid #777;flex:none}
.split-dots{flex:1;margin:2px 2px 0;background:repeating-linear-gradient(90deg,#c8c8c8 0 2px,transparent 2px 4px),none;-webkit-mask:repeating-linear-gradient(#000 0 2px,transparent 2px 4px);mask:repeating-linear-gradient(#000 0 2px,transparent 2px 4px)}
.lower-main{flex:1;display:flex;flex-direction:column;min-width:0}
.tb5{height:23px;background:linear-gradient(#fcfcfc,#f7f7f7);padding-left:6px;width:1181px}
.i.s{width:14px;height:14px}
.gridbox{height:173px;margin-top:3px;border:1px solid #a8a8a8;background:#f0f0f0;display:flex;flex-direction:column;flex:none}
.gridtop{height:153px;display:flex;flex:none}
.gridview{width:1163px;overflow:hidden;flex:none;background:#fff}
.grid{border-collapse:collapse;table-layout:fixed;width:1163px}
.w1{width:33px}.w2{width:74px}.w3{width:35px}.w4{width:33px}.w5{width:202px}.w6{width:166px}.w7{width:156px}.w8{width:60px}.w9{width:133px}.w10{width:38px}.w11{width:49px}.w12{width:62px}.w13{width:61px}.w14{width:61px}
.grid th{height:19px;font-weight:400;font-size:12px;line-height:14px;background:#fff;border-right:1px solid #bcbcbc;border-bottom:1px solid #a8a8a8;padding:0;text-align:center;white-space:nowrap;overflow:hidden}
.grid th.hot{background:linear-gradient(#fbdca4,#f5bf60);color:#4b0082}
.grid td{background:#caffd5;border-right:1px solid #b8b8b8;border-bottom:1px solid #b8b8b8;padding:0 0 0 2px;white-space:nowrap;overflow:hidden}
.r{height:61px}
.r3{height:30px}
.grid td.rh{background:#f8f8f8;padding:0;text-align:center}
.grid td.cur{background:#fccf88;color:#4b0082}
.grid td.act{background:#aee9d8}
.grid td.bk{border-right:1px solid #000}
.grid td.mid{text-align:center;padding:0}
.grid td.red{color:#e01010}
.grid td.shape{padding:0}
.grade{font:10px/12px "Liberation Mono",monospace;text-decoration:underline}
.rebar{display:block;width:201px;height:60px}
.rt{font:12px "Liberation Mono",monospace;letter-spacing:-1.200px;fill:#000}
.vs2-a{height:19px;display:flex;align-items:center}
.vs2-th{width:17px;height:19px;background:#cdcdcd}
.vs2-sp{flex:1}
.vs2-b{height:20px;display:flex;align-items:center}
.vs2{width:17px}
.hs2{height:18px;display:flex;align-items:center;flex:none}
.hs2-a{width:133px;padding-left:5px;flex:none}
.hs2-th{width:686px;height:17px;background:#cdcdcd;flex:none}
.hs2-sp{flex:1}
.hs2-b{width:24px;flex:none}

.status{height:20px;margin-top:2px;display:flex;background:#f0f0f0}
.cell{height:20px;background:#fafafa;border:1px solid #d8d8d8;line-height:18px;padding-left:2px;white-space:nowrap;flex:none;margin-right:2px}
.c1{width:148px}.c2{width:78px}.c3{width:97px}.c4{width:48px}.c5{width:915px;margin-right:1px}.c6{width:70px;margin-right:0}

.taskbar{height:40px;background:#0a1218;display:flex;align-items:center;color:#e8e8e8;position:relative}
.start{width:48px;height:40px;background:#000;display:flex;align-items:center;justify-content:center;flex:none}
.tbi16{width:16px;height:16px}
.search{width:343px;height:40px;background:#333;display:flex;align-items:center;padding-left:11px;flex:none}
.ring{width:20px;height:20px;border:3px solid #d8d8d8;border-radius:50%;flex:none}
.search-text{margin-left:5px;font-size:14px;color:#8a8a8a;letter-spacing:0}
.tb-mic{width:16px;height:20px;margin-left:112px}
.tk{width:43.400px;height:40px;display:flex;align-items:center;justify-content:center;flex:none}
.w50{width:50px}
.tbi20{width:20px;height:20px}
.tbi24{width:24px;height:24px}
.open{border-bottom:2px solid #76b9ed;padding-top:2px}
.act-tk{background:#3a4448}
.tsep{width:3px;height:22px;border-left:1px solid #555;border-right:1px solid #555;flex:none}
.tray-t{margin-left:10px;width:24px;white-space:nowrap;color:#ddd;flex:none}
.tray-cpu{width:50px;margin-left:17px;display:flex;flex-direction:column;align-items:center;line-height:18px;white-space:nowrap;flex:none}
.tray-c{width:12px;height:12px;margin-left:18px;flex:none}
.tray-i{width:16px;height:16px;flex:none}
.t12{margin-left:11px}.t10{margin-left:10px}.t6{margin-left:5px}
.tray-kb{width:23px;height:16px;margin-left:7px;border:1px solid #ddd;flex:none;background:repeating-linear-gradient(90deg,#ddd 0 1px,transparent 1px 3px) center/19px 6px no-repeat}
.tray-zh{margin-left:11px;font-size:12px;color:#fff;flex:none}
.tray-s{width:17px;height:18px;margin-left:14px;flex:none}
.clock{width:60px;margin-left:16px;display:flex;flex-direction:column;align-items:center;line-height:20px;white-space:nowrap;flex:none}
.tray-n{width:18px;height:18px;margin-left:18px;flex:none}
```
